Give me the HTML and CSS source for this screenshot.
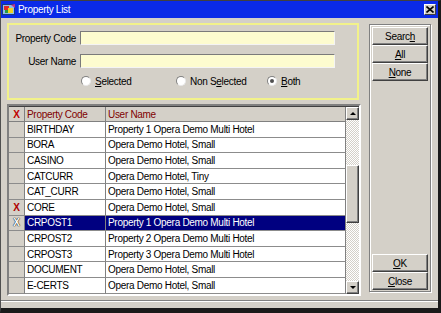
FILE: index.html
```html
<!DOCTYPE html>
<html>
<head>
    <title>Property List</title>
    <link rel="stylesheet" href="styles.css">
</head>
<body>
<div class="window">
    <div class="titlebar">
        <svg class="app-icon" width="14" height="13" viewBox="0 0 14 13">
            <rect x="0.5" y="1.5" width="12" height="10" fill="#8fbce8" stroke="#1b3a80"/>
            <rect x="2" y="3" width="5" height="4" fill="#e02828"/>
            <rect x="6" y="5" width="5" height="5" fill="#f2d21e"/>
            <rect x="3" y="7" width="3" height="3" fill="#2a9a40"/>
            <path d="M9 2l4 -1v4z" fill="#c03090"/>
        </svg>
        <span class="title">Property List</span>
        <span class="close-btn">
            <svg width="8" height="7" viewBox="0 0 8 7"><path d="M0.5 0.5l7 6M7.5 0.5l-7 6" stroke="#000" stroke-width="1.6"/></svg>
        </span>
    </div>

    <div class="client">
        <div class="main">
            <div class="search-box">
                <div class="field-row">
                    <span class="field-label">Property Code</span>
                    <span class="input"></span>
                </div>
                <div class="field-row">
                    <span class="field-label">User Name</span>
                    <span class="input"></span>
                </div>
                <div class="radio-row">
                    <span class="radio-item item-selected"><span class="radio"></span><span><u>S</u>elected</span></span>
                    <span class="radio-item item-non"><span class="radio"></span><span>Non S<u>e</u>lected</span></span>
                    <span class="radio-item"><span class="radio checked"></span><span><u>B</u>oth</span></span>
                </div>
            </div>

            <div class="grid-frame">
                <div class="grid-rows">
                    <div class="row header">
                        <span class="cell mark">X</span>
                        <span class="cell">Property Code</span>
                        <span class="cell">User Name</span>
                    </div>
                    <div class="row"><span class="cell mark"></span><span class="cell">BIRTHDAY</span><span class="cell">Property 1 Opera Demo Multi Hotel</span></div>
                    <div class="row"><span class="cell mark"></span><span class="cell">BORA</span><span class="cell">Opera Demo Hotel, Small</span></div>
                    <div class="row"><span class="cell mark"></span><span class="cell">CASINO</span><span class="cell">Opera Demo Hotel, Small</span></div>
                    <div class="row"><span class="cell mark"></span><span class="cell">CATCURR</span><span class="cell">Opera Demo Hotel, Tiny</span></div>
                    <div class="row"><span class="cell mark"></span><span class="cell">CAT_CURR</span><span class="cell">Opera Demo Hotel, Small</span></div>
                    <div class="row"><span class="cell mark">X</span><span class="cell">CORE</span><span class="cell">Opera Demo Hotel, Small</span></div>
                    <div class="row selected"><span class="cell mark">X</span><span class="cell">CRPOST1</span><span class="cell">Property 1 Opera Demo Multi Hotel</span></div>
                    <div class="row"><span class="cell mark"></span><span class="cell">CRPOST2</span><span class="cell">Property 2 Opera Demo Multi Hotel</span></div>
                    <div class="row"><span class="cell mark"></span><span class="cell">CRPOST3</span><span class="cell">Property 3 Opera Demo Multi Hotel</span></div>
                    <div class="row"><span class="cell mark"></span><span class="cell">DOCUMENT</span><span class="cell">Opera Demo Hotel, Small</span></div>
                    <div class="row"><span class="cell mark"></span><span class="cell">E-CERTS</span><span class="cell">Opera Demo Hotel, Small</span></div>
                </div>
                <div class="scrollbar">
                    <span class="scroll-btn"><span class="arrow up"></span></span>
                    <span class="track track-top"></span>
                    <span class="thumb"></span>
                    <span class="track track-bottom"></span>
                    <span class="scroll-btn"><span class="arrow down"></span></span>
                </div>
            </div>
        </div>

        <div class="side-panel">
            <div class="btn-group">
                <span class="button"><span>Searc<u>h</u></span></span>
                <span class="button"><span><u>A</u>ll</span></span>
                <span class="button"><span><u>N</u>one</span></span>
            </div>
            <div class="btn-group">
                <span class="button"><span><u>O</u>K</span></span>
                <span class="button"><span><u>C</u>lose</span></span>
            </div>
        </div>
    </div>

    <div class="footer"></div>
</div>
</body>
</html>
```

FILE: styles.css
```css
body {
    margin: 0;
    padding: 0;
    background: #1a1a1a;
    font-family: "Liberation Sans", Arial, sans-serif;
    font-size: 10px;
    letter-spacing: -0.3px;
    color: #000;
}

u {
    text-decoration: underline;
    text-underline-offset: 1px;
}

.window {
    width: 441px;
    height: 313px;
    box-sizing: border-box;
    background: #d4d0c8;
    border-top: 1px solid #404040;
    border-left: 1px solid #505050;
    border-right: 3px solid #1a1a1a;
    border-bottom: 5px solid #1a1a1a;
    display: flex;
    flex-direction: column;
}

/* title bar */
.titlebar {
    height: 17px;
    background: #0a2ae8;
    display: flex;
    align-items: center;
    padding-left: 1px;
    color: #fff;
}

.app-icon {
    margin-right: 2px;
}

.title {
    font-size: 10px;
}

.close-btn {
    margin-left: auto;
    margin-right: 2px;
    width: 12px;
    height: 11px;
    box-sizing: border-box;
    background: #d4d0c8;
    border: 1px solid;
    border-color: #fff #404040 #404040 #fff;
    display: flex;
    align-items: center;
    justify-content: center;
}

/* client area */
.client {
    height: 282px;
    box-sizing: border-box;
    padding: 5px 0 0 6px;
    display: flex;
}

.main {
    width: 354px;
    display: flex;
    flex-direction: column;
}

.search-box {
    height: 77px;
    box-sizing: border-box;
    width: 352px;
    border: 2px solid #f2f28a;
    padding-top: 6px;
    display: flex;
    flex-direction: column;
    gap: 9px;
}

.field-row {
    display: flex;
    align-items: center;
    height: 14px;
}

.field-label {
    width: 67px;
    text-align: right;
    margin-right: 4px;
}

.input {
    width: 255px;
    height: 14px;
    box-sizing: border-box;
    background: #fdfccf;
    border: 1px solid;
    border-color: #7a7a7a #f4f4f4 #f4f4f4 #7a7a7a;
}

.radio-row {
    display: flex;
    align-items: center;
    height: 10px;
    margin-top: -1px;
    padding-left: 72px;
}

.radio-item {
    display: flex;
    align-items: center;
    gap: 4px;
}

.item-selected {
    width: 95px;
}

.item-non {
    width: 91px;
}

.radio {
    width: 10px;
    height: 10px;
    box-sizing: border-box;
    border-radius: 50%;
    background: #fff;
    border: 1px solid;
    border-color: #808080 #e8e8e8 #e8e8e8 #808080;
    display: flex;
    align-items: center;
    justify-content: center;
}

.radio.checked::after {
    content: "";
    width: 4px;
    height: 4px;
    border-radius: 50%;
    background: #505050;
}

/* grid */
.grid-frame {
    margin-top: 4px;
    height: 192px;
    box-sizing: border-box;
    border: 2px solid;
    border-color: #808080 #ffffff #ffffff #808080;
    box-shadow: inset 1px 1px 0 #404040;
    display: flex;
    background: #d4d0c8;
}

.grid-rows {
    flex: 1;
    display: flex;
    flex-direction: column;
    overflow: hidden;
}

.row {
    display: grid;
    grid-template-columns: 16px 81px 1fr;
    height: 15.6px;
    flex-shrink: 0;
}

.cell {
    box-sizing: border-box;
    background: #fff;
    border-right: 1px solid #808080;
    border-bottom: 1px solid #8c8c8c;
    padding-left: 2px;
    display: flex;
    align-items: center;
    white-space: nowrap;
    overflow: hidden;
}

.cell.mark {
    background: #d4d0c8;
    justify-content: center;
    padding-left: 0;
    color: #b00000;
    font-weight: bold;
    font-size: 10px;
}

.header {
    height: 15px;
    margin-top: 1px;
}

.header .cell {
    background: #d4d0c8;
    color: #800000;
    border-bottom: 1px solid #808080;
}

.header .cell.mark {
    color: #c00000;
}

.selected .cell {
    background: #000080;
    color: #fff;
}

.selected .cell.mark {
    background: #d4d0c8;
    color: #ffffff;
    text-shadow: 0 0 1px #000, 0 0 1px #000;
}

/* scrollbar */
.scrollbar {
    width: 13px;
    display: flex;
    flex-direction: column;
    padding-top: 1px;
}

.scroll-btn,
.thumb {
    box-sizing: border-box;
    background: #d4d0c8;
    border: 1px solid;
    border-color: #fff #404040 #404040 #fff;
    box-shadow: inset -1px -1px 0 #808080;
}

.scroll-btn {
    height: 13px;
    display: flex;
    align-items: center;
    justify-content: center;
}

.arrow {
    width: 0;
    height: 0;
    border-left: 3px solid transparent;
    border-right: 3px solid transparent;
}

.arrow.up {
    border-bottom: 3px solid #000;
}

.arrow.down {
    border-top: 3px solid #000;
}

.track {
    background: repeating-conic-gradient(#d4d0c8 0 25%, #ffffff 0 50%) 0 0 / 2px 2px;
}

.track-top {
    height: 45px;
}

.thumb {
    height: 58px;
}

.track-bottom {
    flex: 1;
}

/* side buttons */
.side-panel {
    width: 62px;
    height: 268px;
    box-sizing: border-box;
    margin: 1px 0 0 8px;
    padding: 2px 2px 1px 2px;
    border: 1px solid #808080;
    box-shadow: inset 1px 1px 0 #fff, 1px 1px 0 #fff;
    display: flex;
    flex-direction: column;
    justify-content: space-between;
}

.btn-group {
    display: flex;
    flex-direction: column;
}

.button {
    height: 18px;
    box-sizing: border-box;
    background: #d4d0c8;
    border: 1px solid;
    border-color: #fff #404040 #404040 #fff;
    box-shadow: inset -1px -1px 0 #808080;
    display: flex;
    align-items: center;
    justify-content: center;
}

.footer {
    flex: 1;
    border-top: 1px solid #808080;
    box-shadow: inset 0 1px 0 #fff;
}
```
